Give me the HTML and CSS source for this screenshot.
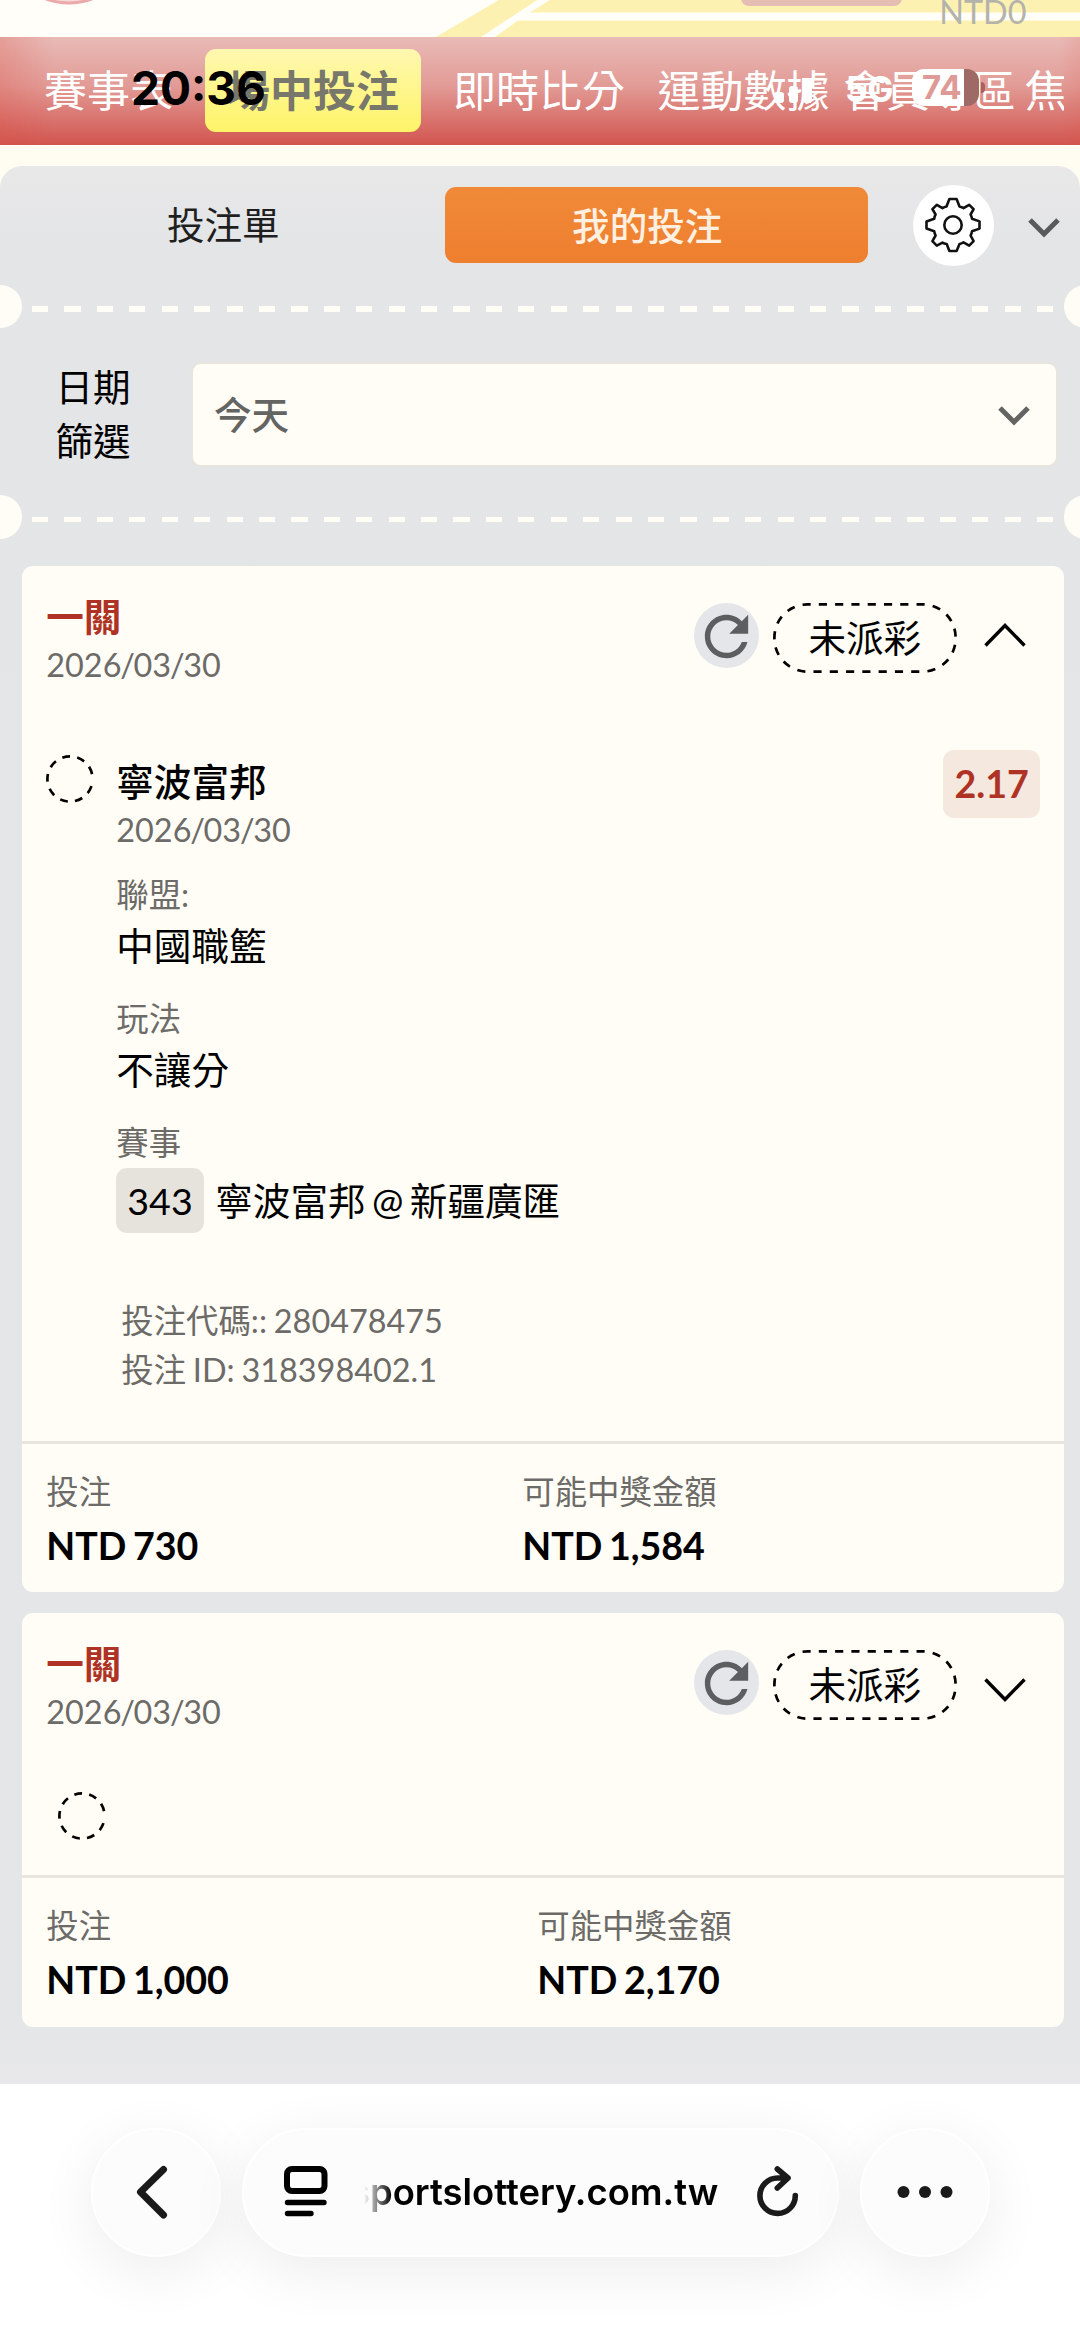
FILE: index.html
```html
<!DOCTYPE html>
<html lang="zh-Hant">
<head>
<meta charset="utf-8">
<title>我的投注</title>
<link rel="stylesheet" href="styles.css">
</head>
<body>
<div class="screen">
  <header class="top">
    <svg class="top-art" width="1080" height="37" viewBox="0 0 1080 37">
      <circle cx="69" cy="-61" r="64" fill="#f7dcd6" stroke="#eba9ab" stroke-width="3"/>
      <path d="M436 37 499 0h38l-56 37zM495 37l23-16.500h562V37zM530 12.500 550 0h530v12.500z" fill="#fdf1b1"/>
      <rect x="741" y="-14" width="161" height="20" rx="8" fill="#e4beb3"/>
    </svg>
    <span class="balance">NTD0</span>
  </header>

  <nav class="nav">
    <a class="nav-item">賽事表</a>
    <a class="nav-item nav-active">場中投注</a>
    <a class="nav-item">即時比分</a>
    <a class="nav-item">運動數據</a>
    <a class="nav-item nav-near">會員專區</a>
    <a class="nav-item nav-last">焦</a>
  </nav>

  <div class="status">
    <span class="clock">20:36</span>
    <svg class="signal" width="54" height="30" viewBox="0 0 54 30" fill="#fff">
      <rect x="0" y="18" width="10" height="11" rx="3"/>
      <rect x="15" y="12" width="9" height="17" rx="3"/>
      <rect x="29" y="5" width="9" height="24" rx="3"/>
    </svg>
    <span class="network">5G</span>
    <span class="battery">74</span>
    <span class="battery-nub"></span>
  </div>

  <main class="panel">
    <div class="tabs">
      <span class="tab">投注單</span>
      <span class="tab tab-active">我的投注</span>
      <span class="gear">
        <svg width="56" height="56" viewBox="-28 -28 56 56" fill="none" stroke="#111" stroke-width="2.600" stroke-linejoin="round">
          <circle r="8.700"/>
          <path d="M-3.600-26H3.600L6.500-18.500Q9.500-17.800 10.500-16.800L16.200-20.200 20.600-15.800 17.600-10.500Q18.800-8 19-6.300L26.500-3.600V3.600L19 6.300Q18.600 9 17.600 10.500L20.600 16.200 16.200 20.600 10.500 17.400Q8.500 18.600 6.500 19L3.600 26H-3.600L-6.300 19Q-9 18.500-10.500 17.600L-16.200 20.600-20.600 16.200-17.400 10.500Q-18.400 8.500-18.800 6.300L-26.500 3.600V-3.600L-18.800-6.300Q-18.400-9-17.400-10.500L-20.600-15.800-16.200-20.200-10.500-16.800Q-8.500-18-6.500-18.500Z"/>
        </svg>
      </span>
      <svg class="tabs-chevron" width="32" height="20" viewBox="0 0 32 20" fill="none" stroke="#595a5b" stroke-width="5"><path d="M2 2 16 16 30 2"/></svg>
    </div>

    <div class="tear"><i class="hole"></i><i class="dashes"></i><i class="hole"></i></div>

    <div class="filter">
      <span class="filter-label">日期<br>篩選</span>
      <div class="select">
        <span>今天</span>
        <svg width="32" height="20" viewBox="0 0 32 20" fill="none" stroke="#646462" stroke-width="5"><path d="M2 2 16 16 30 2"/></svg>
      </div>
    </div>

    <div class="tear"><i class="hole"></i><i class="dashes"></i><i class="hole"></i></div>

    <section class="card">
      <div class="card-head">
        <div class="card-title">
          <div class="kind">一關</div>
          <div class="date">2026<span class="slash">/</span>03<span class="slash">/</span>30</div>
        </div>
        <span class="reload"><svg width="65" height="65" viewBox="0 0 24 24" fill="#5d5e60"><path d="M17.650 6.350C16.200 4.900 14.210 4 12 4c-4.420 0-7.990 3.580-7.990 8s3.570 8 7.990 8c3.730 0 6.840-2.550 7.730-6h-2.080c-.82 2.330-3.040 4-5.650 4-3.310 0-6-2.690-6-6s2.690-6 6-6c1.660 0 3.140.69 4.220 1.780L13 11h7V4l-2.350 2.350z"/></svg></span>
        <span class="state">
          <svg class="state-edge" width="184" height="70" viewBox="0 0 184 70" fill="none" stroke="#000" stroke-width="2.700"><rect x="1.400" y="1.400" width="181.200" height="67.200" rx="33" pathLength="54" stroke-dasharray="1 1" stroke-dashoffset=".6"/></svg>
          未派彩
        </span>
        <svg class="fold" width="44" height="26" viewBox="0 0 44 26" fill="none" stroke="#000" stroke-width="3.400"><path d="M2.500 23.500 22 3.500 41.500 23.500"/></svg>
      </div>

      <div class="leg">
        <svg class="ring" width="48" height="48" viewBox="0 0 48 48" fill="none" stroke="#000" stroke-width="2.700"><circle cx="24" cy="24" r="22.600" pathLength="360" stroke-dasharray="20 18.600" stroke-dashoffset="-18.500"/></svg>
        <div class="leg-body">
          <div class="pick">寧波富邦</div>
          <div class="date leg-date">2026<span class="slash">/</span>03<span class="slash">/</span>30</div>
          <div class="label">聯盟:</div>
          <div class="value">中國職籃</div>
          <div class="label label-gap">玩法</div>
          <div class="value">不讓分</div>
          <div class="label label-gap">賽事</div>
          <div class="match"><span class="match-no">343</span><span class="teams">寧波富邦 @ 新疆廣匯</span></div>
          <div class="codes">投注代碼:: 280478475<br>投注 ID: 318398402.1</div>
        </div>
        <span class="odds">2.17</span>
      </div>

      <div class="totals">
        <div><div class="label">投注</div><div class="money">NTD 730</div></div>
        <div><div class="label">可能中獎金額</div><div class="money">NTD 1,584</div></div>
      </div>
    </section>

    <section class="card card-folded">
      <div class="card-head">
        <div class="card-title">
          <div class="kind">一關</div>
          <div class="date">2026<span class="slash">/</span>03<span class="slash">/</span>30</div>
        </div>
        <span class="reload"><svg width="65" height="65" viewBox="0 0 24 24" fill="#5d5e60"><path d="M17.650 6.350C16.200 4.900 14.210 4 12 4c-4.420 0-7.990 3.580-7.990 8s3.570 8 7.990 8c3.730 0 6.840-2.550 7.730-6h-2.080c-.82 2.330-3.040 4-5.650 4-3.310 0-6-2.690-6-6s2.690-6 6-6c1.660 0 3.140.69 4.220 1.780L13 11h7V4l-2.350 2.350z"/></svg></span>
        <span class="state">
          <svg class="state-edge" width="184" height="70" viewBox="0 0 184 70" fill="none" stroke="#000" stroke-width="2.700"><rect x="1.400" y="1.400" width="181.200" height="67.200" rx="33" pathLength="54" stroke-dasharray="1 1" stroke-dashoffset=".6"/></svg>
          未派彩
        </span>
        <svg class="fold fold-down" width="44" height="26" viewBox="0 0 44 26" fill="none" stroke="#000" stroke-width="3.400"><path d="M2.500 2.500 22 22.500 41.500 2.500"/></svg>
      </div>
      <div class="folded-legs">
        <svg class="ring" width="48" height="48" viewBox="0 0 48 48" fill="none" stroke="#000" stroke-width="2.700"><circle cx="24" cy="24" r="22.600" pathLength="360" stroke-dasharray="20 18.600" stroke-dashoffset="-18.500"/></svg>
      </div>
      <div class="totals totals-wide">
        <div><div class="label">投注</div><div class="money">NTD 1,000</div></div>
        <div><div class="label">可能中獎金額</div><div class="money">NTD 2,170</div></div>
      </div>
    </section>
  </main>

  <footer class="browser">
    <span class="round round-back"><svg width="34" height="56" viewBox="0 0 34 56" fill="none" stroke="#1a1a1a" stroke-width="7" stroke-linecap="round" stroke-linejoin="round"><path d="M28.500 5.500 5.500 28 28.500 51"/></svg></span>
    <div class="address">
      <svg width="44" height="52" viewBox="0 0 44 52" fill="none" stroke="#000" stroke-linecap="round">
        <rect x="3" y="3" width="37.500" height="22" rx="5" stroke-width="6"/>
        <path d="M3.500 36.500H40M3.500 47.500H27" stroke-width="5.400"/>
      </svg>
      <span class="host-clip"><span class="host">sportslottery.com.tw</span></span>
      <svg width="42" height="52" viewBox="0 0 42 52" fill="none" stroke="#1a1a1a" stroke-width="5.600" stroke-linecap="round" stroke-linejoin="round">
        <path d="M38.300 29.500A17.700 17.700 0 1 1 20.600 12H31M20.300 3 31 12 20.300 22"/>
      </svg>
    </div>
    <span class="round"><svg width="56" height="14" viewBox="0 0 56 14" fill="#1a1a1a"><circle cx="6.500" cy="7" r="6"/><circle cx="28" cy="7" r="6"/><circle cx="49.500" cy="7" r="6"/></svg></span>
  </footer>
</div>
</body>
</html>
```
FILE: styles.css
```css
* { box-sizing: border-box; }

body {
  margin: 0;
  background: #fff;
  color: #000;
  font-family: Lato, "Noto Sans CJK TC", sans-serif;
  font-size: 37.600px;
}

svg { display: block; flex: none; }

.screen {
  position: relative;
  width: 1080px;
  height: 2348px;
  overflow: hidden;
  display: flex;
  flex-direction: column;
  background: #fffdf1;
}

/* page header scrolled under the status bar */
.top { position: relative; height: 36.500px; flex: none; overflow: hidden; background: #fffef8; }
.top-art { position: absolute; left: 0; top: 0; }
.balance {
  position: absolute;
  right: 53.500px;
  top: -7px;
  color: #b4b3ab;
  font-size: 32.400px;
  line-height: 38px;
}

.nav {
  height: 108.300px;
  flex: none;
  display: flex;
  align-items: center;
  padding-left: 44px;
  margin-bottom: 21.500px;
  overflow: hidden;
  white-space: nowrap;
  color: #fff;
  font-size: 43px;
  background:
    linear-gradient(90deg, rgba(216, 75, 60, .25), rgba(216, 75, 60, 0) 5%, rgba(216, 75, 60, 0) 98%, rgba(216, 75, 60, .12)),
    linear-gradient(#e9bbb7, #e29b96 45%, #d2554f);
}
.nav-item { flex: none; line-height: 60px; margin-right: 32.500px; }
.nav-item:first-child { margin-right: 32px; }
.nav-active {
  display: flex;
  align-items: center;
  height: 83px;
  padding: 0 22px;
  margin-right: 32px;
  border-radius: 11px;
  font-weight: 700;
  color: #77776c;
  background: linear-gradient(#fff8b0, #fef468);
}
.nav-near { margin-left: -18.500px; margin-right: 9px; }
.nav-last { width: 39px; margin: 0; overflow: hidden; }

/* phone status bar, drawn over the page */
.status { position: absolute; left: 0; top: 0; width: 1080px; height: 145px; font-family: Inter, sans-serif; font-weight: 700; }
.clock { position: absolute; left: 131px; top: 60px; font-size: 46px; line-height: 56px; }
.signal { position: absolute; left: 774px; top: 74px; }
.network { position: absolute; left: 845px; top: 67px; color: #fff; font-size: 35px; line-height: 44px; }
.battery {
  position: absolute;
  left: 912px;
  top: 69px;
  width: 67px;
  height: 37px;
  padding-left: 10px;
  border-radius: 12px;
  background: linear-gradient(90deg, #fff 52px, #9f6a66 52px);
  color: #dd9a96;
  font-size: 33px;
  line-height: 37px;
}
.battery-nub { position: absolute; left: 981px; top: 82px; width: 4px; height: 11px; border-radius: 0 4px 4px 0; background: #a5625e; }

.panel {
  height: 1918px;
  flex: none;
  border-radius: 22px 22px 0 0;
  background: linear-gradient(#e8e8e8, #e4e5e7 70px, #e4e6e8 1870px, #e8e8ea);
}

.tabs { height: 118.700px; display: flex; align-items: flex-start; padding-top: 18.700px; }
.tab { width: 444.500px; padding-left: 2px; line-height: 80px; text-align: center; color: #1f1f1f; }
.tab-active {
  width: 423.500px;
  height: 76px;
  margin-top: 2.500px;
  padding: 0 18px 0 0;
  line-height: 74px;
  border-radius: 11px;
  font-weight: 500;
  color: #fff0e2;
  background: linear-gradient(#f08a38, #ee7f2f);
  font-family: "Noto Sans CJK TC", sans-serif;
}
.gear {
  display: flex;
  align-items: center;
  justify-content: center;
  width: 81px;
  height: 81px;
  margin-left: 44.500px;
  border-radius: 50%;
  background: #fff;
}
.tabs-chevron { margin: 33px 0 0 34px; }

/* ticket perforation */
.tear { height: 43.300px; display: flex; align-items: center; overflow: hidden; }
.hole { flex: none; width: 43.400px; height: 43.400px; border-radius: 50%; background: #fffdf6; margin-left: -21.700px; }
.hole:last-child { margin-left: 10.300px; }
.dashes {
  flex: none;
  width: 1021.500px;
  height: 5.400px;
  margin: 5px 0 0 10.300px;
  background: repeating-linear-gradient(90deg, #fffdf6 0 16.200px, transparent 16.200px 32.420px);
}

.filter { height: 167.200px; display: flex; align-items: center; }
.filter-label { width: 191px; padding: 5px 0 0 55.500px; line-height: 54px; }
.select {
  display: flex;
  align-items: center;
  justify-content: space-between;
  width: 867px;
  height: 105.500px;
  margin-top: 5px;
  padding: 0 26px 0 21px;
  border: 2px solid #e8e4de;
  border-radius: 10px;
  background: #fffdf6;
  color: #646462;
  font-weight: 500;
  font-family: "Noto Sans CJK TC", sans-serif;
}
.select span { line-height: 60px; margin-top: -3px; }
.select svg { margin-top: 3px; }

.card {
  width: 1042.500px;
  height: 1026px;
  margin: 27px 0 0 21.600px;
  padding-top: 28px;
  border-radius: 11px;
  background: #fffdf6;
}
.card-folded { height: 413.400px; margin-top: 21.500px; }

.card-head { display: flex; height: 93px; padding-left: 24.700px; }
.card-title { width: 648px; }
.kind { font-weight: 700; line-height: 46px; color: #ae3324; }
.date { font-size: 32.400px; line-height: 50px; color: #6c6b68; }
.slash { margin: 0 -1.250px; }
.reload { width: 65px; height: 65px; margin-top: 9px; border-radius: 50%; background: #e4e6e9; }
.reload svg { margin-top: 1px; }
.state { position: relative; width: 184px; height: 70px; margin: 9px 0 0 13.500px; line-height: 69px; text-align: center; }
.state-edge { position: absolute; left: 0; top: 0; }
.fold { margin: 28px 0 0 26px; }
.fold-down { margin-top: 36px; }

.leg { display: flex; height: 691px; margin-top: 63px; padding-left: 24.700px; }
.ring { margin-top: 5.700px; }
.leg-body { flex: 1; padding: 8px 0 0 22px; }
.pick { font-weight: 500; font-family: "Noto Sans CJK TC", sans-serif; line-height: 44px; }
.leg-date { margin-top: 3px; }
.leg-date + .label { margin-top: 17px; }
.label { font-size: 32.400px; line-height: 46px; color: #6c6b68; }
.label-gap { margin-top: 22px; }
.value { line-height: 56px; }
.match { display: flex; align-items: center; gap: 11.500px; height: 65px; margin-top: 2px; white-space: nowrap; word-spacing: -3.200px; }
.match-no { width: 87.500px; height: 65px; line-height: 65px; border-radius: 11px; text-align: center; background: #e6e3dc; }
.teams { line-height: 63px; }
.codes { margin-top: 63.500px; padding-left: 5px; font-size: 32.400px; line-height: 49px; word-spacing: -1.500px; color: #6c6b68; }
.odds {
  width: 97px;
  height: 68px;
  margin-right: 24px;
  border-radius: 11px;
  line-height: 68px;
  text-align: center;
  font-weight: 700;
  color: #ae3324;
  background: #f5e8df;
}

.folded-legs { height: 141.200px; padding: 51.700px 0 0 36px; }

.totals {
  display: grid;
  grid-template-columns: 476px 1fr;
  padding: 25px 0 0 24.700px;
  border-top: 3px solid #e8e5de;
}
.totals-wide { grid-template-columns: 491px 1fr; }
.money { line-height: 62px; font-weight: 700; word-spacing: -2.600px; }

/* browser toolbar */
.browser {
  flex: 1;
  display: flex;
  align-items: flex-start;
  gap: 21.500px;
  padding: 43.700px 0 0 91px;
  overflow: hidden;
  background: #fff;
}
.round, .address {
  height: 129px;
  display: flex;
  align-items: center;
  justify-content: center;
  border: 2.500px solid #fff;
  border-radius: 65px;
  background: #fcfcfc;
  box-shadow: 0 14px 60px rgba(0, 0, 0, .075);
}
.round { width: 129.500px; }
.round-back { padding-right: 8px; }
.address { width: 596.500px; justify-content: space-between; padding: 0 38px 0 40px; }
.host-clip {
  width: 354px;
  overflow: hidden;
  display: flex;
  justify-content: flex-end;
  margin-left: -2px;
  -webkit-mask-image: linear-gradient(90deg, transparent, #000 28px);
  mask-image: linear-gradient(90deg, transparent, #000 28px);
}
.host { flex: none; font: 600 36.400px/50px Inter, sans-serif; }
```
